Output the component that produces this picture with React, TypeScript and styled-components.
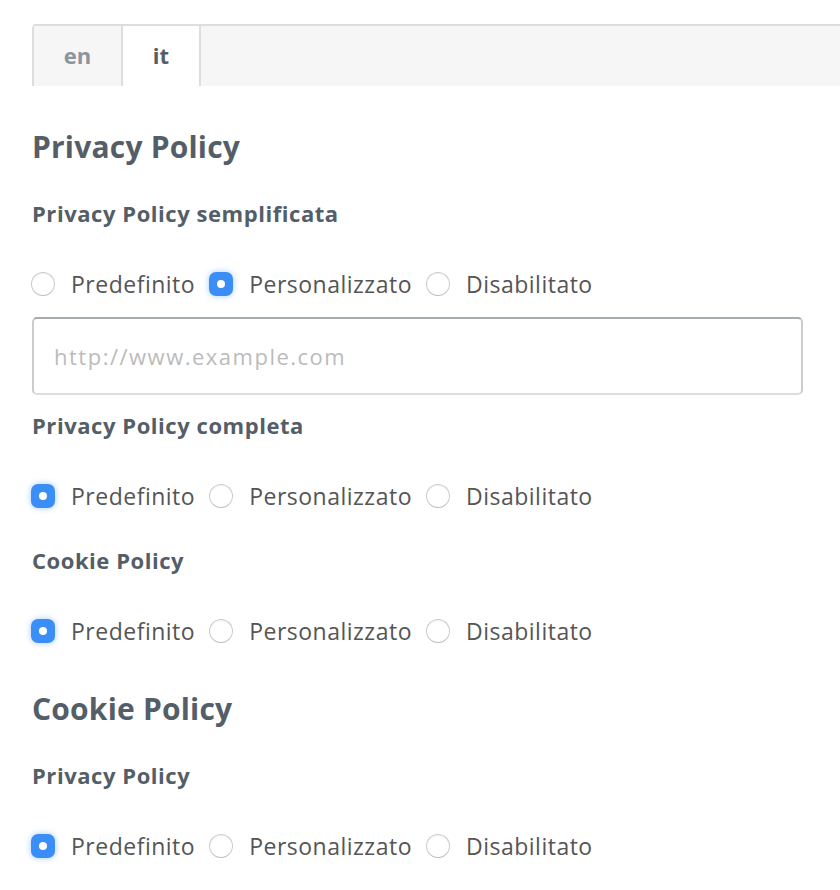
import React, { useState } from 'react';
import styled, { createGlobalStyle, css } from 'styled-components';

const GlobalStyle = createGlobalStyle`
  html, body {
    margin: 0;
    padding: 0;
    background: #ffffff;
  }
  body {
    font-family: "Open Sans", Lato, sans-serif;
    color: #555555;
  }
`;

type Choice = 'default' | 'custom' | 'disabled';

const choices: { value: Choice; label: string }[] = [
  { value: 'default', label: 'Predefinito' },
  { value: 'custom', label: 'Personalizzato' },
  { value: 'disabled', label: 'Disabilitato' },
];

const Page = styled.div`
  padding: 24px 0 40px 32px;
`;

const TabBar = styled.div`
  display: flex;
  height: 62px;
  box-sizing: border-box;
  background: #f6f6f6;
  border-top: 2px solid #dddddd;
  border-left: 2px solid #dddddd;
  border-top-left-radius: 5px;
`;

const Tab = styled.button<{ $active?: boolean; $width: number }>`
  width: ${({ $width }) => $width}px;
  margin-top: -2px;
  border: none;
  border-right: 2px solid #dddddd;
  border-top: 2px solid #dddddd;
  font-family: "Open Sans", sans-serif;
  font-weight: 700;
  font-size: 22px;
  padding: 0 0 2px;
  cursor: pointer;
  ${({ $active }) =>
    $active
      ? css`
          background: #ffffff;
          color: #555e67;
        `
      : css`
          background: #f6f6f6;
          color: #8c959d;
        `}
`;

const Content = styled.div`
  padding-right: 37px;
`;

const SectionTitle = styled.h2<{ $top: number }>`
  margin: ${({ $top }) => $top}px 0 0;
  font-size: 30px;
  line-height: 36px;
  font-weight: 700;
  letter-spacing: 0.2px;
  color: #545e68;
`;

const Field = styled.div<{ $top: number }>`
  margin-top: ${({ $top }) => $top}px;
  display: flex;
  flex-direction: column;
`;

const FieldLabel = styled.h3`
  margin: 0 0 47px;
  font-size: 22px;
  line-height: 24px;
  font-weight: 700;
  letter-spacing: 0.55px;
  color: #545e68;
`;

const RadioRow = styled.div`
  display: flex;
  align-items: center;
  height: 24px;
  margin-left: -1px;
`;

const Option = styled.label`
  display: flex;
  align-items: center;
  gap: 16px;
  margin-right: 14px;
  font-size: 23px;
  line-height: 24px;
  letter-spacing: 0.5px;
  color: #555555;
  cursor: pointer;
`;

const HiddenInput = styled.input`
  display: none;
`;

const RadioMark = styled.span<{ $checked: boolean }>`
  position: relative;
  width: 24px;
  height: 24px;
  box-sizing: border-box;
  flex-shrink: 0;
  ${({ $checked }) =>
    $checked
      ? css`
          border-radius: 7px;
          background: #3a8ef6;
          box-shadow: 0 0 6px rgba(58, 142, 246, 0.45);
          &::after {
            content: '';
            position: absolute;
            left: 8px;
            top: 8px;
            width: 8px;
            height: 8px;
            border-radius: 50%;
            background: #ffffff;
          }
        `
      : css`
          border-radius: 50%;
          border: 1.5px solid #cccccc;
          border-bottom-color: #bdbdbd;
          background: #ffffff;
          box-shadow: inset 0 1px 1px rgba(0, 0, 0, 0.06);
        `}
`;

const UrlInput = styled.input`
  margin-top: 21px;
  height: 78px;
  box-sizing: border-box;
  padding: 0 20px;
  border: 2px solid #cccccc;
  border-top-color: #a6abb0;
  border-bottom-color: #dddddd;
  border-radius: 5px;
  font-family: "Open Sans", sans-serif;
  font-size: 22px;
  letter-spacing: 1.5px;
  color: #555555;
  outline: none;
  &::placeholder {
    color: #bbbbbb;
  }
`;

type PolicyProps = {
  name: string;
  label: string;
  top: number;
  initial: Choice;
  withUrl?: boolean;
};

const PolicyField = ({ name, label, top, initial, withUrl }: PolicyProps) => {
  const [value, setValue] = useState<Choice>(initial);

  return (
    <Field $top={top}>
      <FieldLabel>{label}</FieldLabel>
      <RadioRow>
        {choices.map((c) => (
          <Option key={c.value}>
            <HiddenInput
              type="radio"
              name={name}
              checked={value === c.value}
              onChange={() => setValue(c.value)}
            />
            <RadioMark $checked={value === c.value} />
            {c.label}
          </Option>
        ))}
      </RadioRow>
      {withUrl && value === 'custom' && <UrlInput placeholder="http://www.example.com" />}
    </Field>
  );
};

export default function App() {
  const [lang, setLang] = useState<'en' | 'it'>('it');

  return (
    <>
      <GlobalStyle />
      <Page>
        <TabBar>
          <Tab $width={89} $active={lang === 'en'} onClick={() => setLang('en')}>
            en
          </Tab>
          <Tab $width={78} $active={lang === 'it'} onClick={() => setLang('it')}>
            it
          </Tab>
        </TabBar>
        <Content>
          <SectionTitle $top={43}>Privacy Policy</SectionTitle>
          <PolicyField
            name="pp-simple"
            label="Privacy Policy semplificata"
            top={36}
            initial="custom"
            withUrl
          />
          <PolicyField name="pp-full" label="Privacy Policy completa" top={18} initial="default" />
          <PolicyField name="cookie" label="Cookie Policy" top={40} initial="default" />
          <SectionTitle $top={48}>Cookie Policy</SectionTitle>
          <PolicyField name="cp-privacy" label="Privacy Policy" top={36} initial="default" />
        </Content>
      </Page>
    </>
  );
}
